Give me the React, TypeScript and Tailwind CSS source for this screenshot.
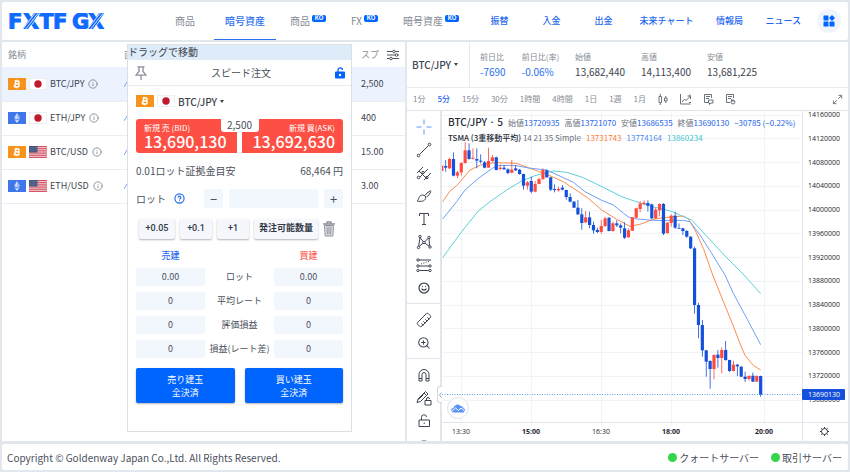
import type { ReactNode } from "react";
import { Info, CircleHelp, Smile, ZoomIn, Maximize2, Ruler } from "lucide-react";

/* ---------- shared pieces ---------- */

function Bitcoin() {
  return (
    <svg viewBox="0 0 18 12" className="h-3 w-[18px] shrink-0" aria-hidden="true">
      <rect width="18" height="12" fill="#f7931a" />
      <g transform="rotate(12 9 6)" fill="none" stroke="#fff" strokeWidth="1.5">
        <path d="M7.2 2.8v6.4M7.2 3.2h2.3a1.3 1.3 0 0 1 0 2.7H7.2M7.2 5.9h2.7a1.5 1.5 0 0 1 0 3H7.2" />
        <path d="M6 3.1h1.4M6 8.9h1.4M8 1.8v1.2M9.6 1.8v1.2M8 9v1.3M9.6 9v1.3" strokeWidth="0.9" />
      </g>
    </svg>
  );
}

function Ether() {
  return (
    <svg viewBox="0 0 18 12" className="h-3 w-[18px] shrink-0" aria-hidden="true">
      <rect width="18" height="12" fill="#3f76ea" />
      <path d="M9 1 6.2 6 9 7.6 11.800 6Z" fill="#cfe0ff" />
      <path d="M9 1v6.600L11.800 6Z" fill="#9fbffa" />
      <path d="M6.300 7 9 11l2.700-4L9 8.500Z" fill="#dfeaff" />
    </svg>
  );
}

function Japan() {
  return (
    <svg viewBox="0 0 18 12" className="h-3 w-[18px] shrink-0" aria-hidden="true">
      <rect x="0.500" y="0.500" width="17" height="11" fill="#fff" stroke="#eceff3" />
      <circle cx="9" cy="6" r="3.700" fill="#c01a2c" />
    </svg>
  );
}

function Usa() {
  return (
    <svg viewBox="0 0 18 12" className="h-3 w-[18px] shrink-0" aria-hidden="true">
      <rect width="18" height="12" fill="#f3d9dc" />
      {[0, 1, 2, 3, 4, 5, 6].map((n) => (
        <rect key={n} y={n * 1.85} width="18" height="0.95" fill="#d0485a" />
      ))}
      <rect width="8.500" height="6.500" fill="#46557f" />
      <path d="M1 1.500h7M1 3.200h7M1 4.900h7" stroke="#8b97b8" strokeWidth="0.600" strokeDasharray="0.800 0.800" />
    </svg>
  );
}

function Caret() {
  return <span className="border-x-[2px] border-t-[3px] border-x-transparent border-t-[#3d4450]" />;
}

function Ko() {
  return (
    <span className="mb-[5px] flex h-[7px] w-[14px] items-center justify-center rounded-[2px] bg-[#0064ff] font-['Inter',sans-serif] text-[6px] font-bold leading-none text-white">
      KO
    </span>
  );
}

/* ---------- top bar ---------- */

function Logo() {
  return (
    <svg viewBox="0 0 98 16" className="h-4 w-[98px] shrink-0" role="img" aria-label="FXTF GX">
      <text
        x="-1 14 30 44 63 79"
        y="16"
        fill="#0f6bff"
        stroke="#0f6bff"
        strokeWidth="1"
        fontFamily="'DejaVu Sans', sans-serif"
        fontSize="21"
        fontWeight="700"
      >
        FXTFGX
      </text>
      <g stroke="#fff" strokeWidth="0.8">
        <path d="M13 17 27 -1M16 17 30 -1M19 17 32 -1" />
        <path d="M78 17 92 -1M81 17 95 -1M84 17 97 -1" />
      </g>
    </svg>
  );
}

const markets = [
  { name: "商品", ko: false, current: false },
  { name: "暗号資産", ko: false, current: true },
  { name: "商品", ko: true, current: false },
  { name: "FX", ko: true, current: false },
  { name: "暗号資産", ko: true, current: false },
];

const services = ["振替", "入金", "出金", "未来チャート", "情報局", "ニュース"];

function TopBar() {
  return (
    <header className="flex h-[38px] items-center rounded-[2px] bg-white pl-[7px] pr-[7px]">
      <Logo />
      <nav className="ml-[57px] flex h-full gap-[3px] text-[10px] text-[#858b94]">
        {markets.map((m, i) => (
          <a
            key={i}
            href="#"
            className={
              m.current
                ? "flex items-center gap-[2px] whitespace-nowrap border-b border-[#2b6ff0] px-[11px] font-medium text-[#2b6ff0]"
                : "flex items-center gap-[2px] whitespace-nowrap border-b border-transparent px-[11px] first:mr-[5px]"
            }
          >
            {m.name}
            {m.ko && <Ko />}
          </a>
        ))}
      </nav>
      <nav className="ml-auto flex items-center text-[9px] font-medium text-[#1f68ee]">
        {services.map((s) => (
          <a key={s} href="#" className="min-w-[52px] whitespace-nowrap px-[10px] text-center">
            {s}
          </a>
        ))}
      </nav>
      <button aria-label="メニュー" className="ml-[6px] flex h-6 w-6 shrink-0 items-center justify-center rounded-full bg-[#f0f4fd]">
        <svg viewBox="0 0 12 12" className="h-3 w-3" fill="#0064ff" aria-hidden="true">
          <rect x="0.500" y="0.500" width="5" height="5" rx="0.500" />
          <rect x="0.500" y="6.500" width="5" height="5" rx="0.500" />
          <rect x="6.500" y="6.500" width="5" height="5" rx="0.500" />
          <path d="m9 0 3 3-3 3-3-3Z" />
        </svg>
      </button>
    </header>
  );
}

/* ---------- instrument list ---------- */

const instruments = [
  { pair: "BTC/JPY", spread: "2,500", coin: <Bitcoin />, flag: <Japan /> },
  { pair: "ETH/JPY", spread: "400", coin: <Ether />, flag: <Japan /> },
  { pair: "BTC/USD", spread: "15.00", coin: <Bitcoin />, flag: <Usa /> },
  { pair: "ETH/USD", spread: "3.00", coin: <Ether />, flag: <Usa /> },
];

function InstrumentList() {
  return (
    <section className="w-[403px] shrink-0 bg-white">
      <table className="w-full table-fixed border-collapse text-left text-[9px] text-[#3d4450]">
        <colgroup>
          <col className="w-[122px]" />
          <col />
          <col className="w-[44px]" />
        </colgroup>
        <thead>
          <tr className="h-[25px] text-[#8a9099]">
            <th className="pl-[6px] font-normal">銘柄</th>
            <th className="font-normal">直近</th>
            <th className="font-normal">
              <span className="flex items-center gap-2 whitespace-nowrap">
                スプ
                <button aria-label="表示設定">
                  <svg viewBox="0 0 12 12" className="h-3 w-3" fill="#fff" stroke="#50565f" aria-hidden="true">
                    <path d="M0 2.500h12M0 6h12M0 9.500h12" />
                    <circle cx="7" cy="2.500" r="1.300" />
                    <circle cx="9.500" cy="6" r="1.300" />
                    <circle cx="4" cy="9.500" r="1.300" />
                  </svg>
                </button>
              </span>
            </th>
          </tr>
        </thead>
        <tbody>
          {instruments.map((row, i) => (
            <tr
              key={row.pair}
              className={i === 0 ? "h-[34px] border-b border-[#eaedf1] bg-[#ecf2fe]" : "h-[34px] border-b border-[#eaedf1]"}
            >
              <td className="pl-[6px]">
                <span className="flex items-center gap-[3px]">
                  {row.coin}
                  {row.flag}
                  {row.pair}
                  <Info className="ml-px h-[10px] w-[10px] text-[#7c828b]" strokeWidth={2} />
                </span>
              </td>
              <td>
                <svg viewBox="0 0 60 14" className="h-[14px] w-[60px]" fill="none" stroke="#7ea6f5" aria-hidden="true">
                  <path d="M0 10 3 5l4 3 6-5 8 4 9-3 8 5 9-4 13 3" />
                </svg>
              </td>
              <td>{row.spread}</td>
            </tr>
          ))}
        </tbody>
      </table>
    </section>
  );
}

/* ---------- speed order window ---------- */

const positions = [
  { label: "ロット", sell: "0.00", buy: "0.00" },
  { label: "平均レート", sell: "0", buy: "0" },
  { label: "評価損益", sell: "0", buy: "0" },
  { label: "損益(レート差)", sell: "0", buy: "0" },
];

const steps = [
  { text: "+0.05", cls: "w-9 font-medium" },
  { text: "+0.1", cls: "w-8 font-medium" },
  { text: "+1", cls: "w-8 font-medium" },
  { text: "発注可能数量", cls: "w-16 font-bold" },
];

function SpeedOrder() {
  return (
    <section className="absolute left-[127px] top-[44px] w-[225px] border border-[#dcdfe3] bg-white pb-7 text-[10px] text-[#4a505b]">
      <div className="h-[15px] cursor-move bg-[#deebf9] leading-[14px] text-[#3d4450]">ドラッグで移動</div>
      <div className="flex h-[26px] items-center justify-between border-b border-[#e8ebef] pl-[7px] pr-[6px]">
        <button aria-label="固定">
          <svg viewBox="0 0 12 14" className="h-[14px] w-3" fill="none" stroke="#8a9099" strokeWidth="1.300" aria-hidden="true">
            <path d="M2.500.8h7M4 1v4.500L1 9.200h10L8 5.500V1M6 9.200V14" />
          </svg>
        </button>
        <h2>スピード注文</h2>
        <button aria-label="ロック解除">
          <svg viewBox="0 0 10 12" className="h-3 w-[10px]" fill="none" aria-hidden="true">
            <path d="M3 5V3a2.200 2.200 0 0 1 4.400 0" stroke="#0064ff" strokeWidth="1.300" />
            <path d="M0 5.500a1 1 0 0 1 1-1h8a1 1 0 0 1 1 1v5a1 1 0 0 1-1 1H1a1 1 0 0 1-1-1Z" fill="#0064ff" />
            <circle cx="5" cy="8" r="1.200" fill="#fff" />
          </svg>
        </button>
      </div>

      <div className="px-2">
        <button className="mt-[9px] flex h-3 items-center gap-[3px] font-medium text-[#3d4450]">
          <Bitcoin />
          <Japan />
          BTC/JPY
          <Caret />
        </button>

        <div className="relative mt-3 flex gap-[5px] text-white">
          <button className="h-[34px] flex-1 rounded-l-[3px] bg-[#fd4f43] px-2 pb-px text-left">
            <span className="block text-[8px] leading-[11px]">新規 売 (BID)</span>
            <span className="block text-[16px] font-medium leading-4">13,690,130</span>
          </button>
          <button className="h-[34px] flex-1 rounded-r-[3px] bg-[#fd4f43] px-2 pb-px text-right">
            <span className="block text-[8px] leading-[11px]">新規 買(ASK)</span>
            <span className="block text-[16px] font-medium leading-4">13,692,630</span>
          </button>
          <span className="absolute left-1/2 top-0 h-[13px] w-[38px] -translate-x-1/2 rounded-b-[3px] bg-white text-center leading-[11px] text-[#4a505b]">
            2,500
          </span>
        </div>

        <div className="my-3 flex justify-between leading-3">
          <span>0.01ロット証拠金目安</span>
          <span>68,464 円</span>
        </div>

        <div className="flex h-[19px] items-center">
          <label htmlFor="lot">ロット</label>
          <CircleHelp className="ml-2 h-[11px] w-[11px] text-[#1f68ee]" strokeWidth={2.5} />
          <button aria-label="減らす" className="ml-auto h-[19px] w-[19px] rounded-[2px] bg-[#f2f6fd] text-[13px] leading-none">
            −
          </button>
          <input id="lot" className="mx-[6px] h-[19px] w-[89px] rounded-[2px] bg-[#f2f6fd] px-1 outline-none" />
          <button aria-label="増やす" className="h-[19px] w-[19px] rounded-[2px] bg-[#f2f6fd] text-[13px] leading-none">
            +
          </button>
        </div>

        <div className="ml-[3px] mt-[11px] flex items-center gap-[5px]">
          {steps.map((s) => (
            <button
              key={s.text}
              className={`${s.cls} h-5 whitespace-nowrap rounded-[2px] bg-[#f5f7fd] font-['Roboto','Noto_Sans_CJK_JP',sans-serif] text-[9px] text-[#333a46] shadow-[0_1px_2px_rgba(0,0,0,0.3)]`}
            >
              {s.text}
            </button>
          ))}
          <button aria-label="クリア">
            <svg viewBox="0 0 12 16" className="h-4 w-3" fill="none" stroke="#8a9099" aria-hidden="true">
              <path d="M0 3h12M4 2.500V1h4v1.500" strokeWidth="1.300" />
              <path d="m1.500 4.500.7 10.500h7.600l.7-10.500Z" fill="#e4e6e9" />
              <path d="m4 5.500.3 8M6 5.500v8M8 5.500l-.3 8" />
            </svg>
          </button>
        </div>

        <table className="mt-[10px] w-full table-fixed border-separate border-spacing-0 text-center text-[9px]">
          <thead>
            <tr className="h-[13px] leading-[13px]">
              <th className="w-[69px] font-medium text-[#1f68ee]">売建</th>
              <th />
              <th className="w-[69px] font-medium text-[#fd6458]">買建</th>
            </tr>
          </thead>
          <tbody>
            {positions.map((p) => (
              <tr key={p.label}>
                <td className="pt-[6px]">
                  <span className="block h-[18px] rounded-[2px] bg-[#f2f6fd] leading-[18px]">{p.sell}</span>
                </td>
                <th className="whitespace-nowrap pt-[6px] font-normal leading-[18px]">{p.label}</th>
                <td className="pt-[6px]">
                  <span className="block h-[18px] rounded-[2px] bg-[#f2f6fd] leading-[18px]">{p.buy}</span>
                </td>
              </tr>
            ))}
          </tbody>
        </table>

        <div className="mt-[10px] flex gap-[10px] text-[9px] leading-[13px] text-white">
          <button className="h-[35px] flex-1 rounded-[2px] bg-[#0064ff] shadow-[0_1px_2px_rgba(0,0,0,0.3)]">
            売り建玉
            <br />
            全決済
          </button>
          <button className="h-[35px] flex-1 rounded-[2px] bg-[#0064ff] shadow-[0_1px_2px_rgba(0,0,0,0.3)]">
            買い建玉
            <br />
            全決済
          </button>
        </div>
      </div>
    </section>
  );
}

/* ---------- quote header ---------- */

const quotes = [
  { label: "前日比", value: "-7690", accent: true },
  { label: "前日比(率)", value: "-0.06%", accent: true },
  { label: "始値", value: "13,682,440", accent: false },
  { label: "高値", value: "14,113,400", accent: false },
  { label: "安値", value: "13,681,225", accent: false },
];

function QuoteHeader() {
  return (
    <div className="flex h-[46px] border-b border-[#e8ebef]">
      <button className="flex w-[63px] items-center gap-[3px] border-r border-[#e8ebef] pl-[5px] text-[10px] font-medium text-[#3d4450]">
        BTC/JPY
        <Caret />
      </button>
      <dl className="flex items-center gap-4 pl-[10px]">
        {quotes.map((q) => (
          <div key={q.label} className="whitespace-nowrap">
            <dt className="text-[8px] leading-[14px] text-[#858b94]">{q.label}</dt>
            <dd className={q.accent ? "text-[10px] leading-[15px] text-[#2b6ff0]" : "text-[10px] leading-[15px] text-[#3d4450]"}>{q.value}</dd>
          </div>
        ))}
      </dl>
    </div>
  );
}

const frames = ["1分", "5分", "15分", "30分", "1時間", "4時間", "1日", "1週", "1月"];

function FrameBar() {
  return (
    <div className="flex h-[23px] items-center gap-3 border-b border-[#dfe4ea] pl-[6px] pr-[5px] text-[8px] text-[#858b94]">
      {frames.map((f) => (
        <button key={f} className={f === "5分" ? "whitespace-nowrap font-medium text-[#1f68ee]" : "whitespace-nowrap"}>
          {f}
        </button>
      ))}
      <button aria-label="ローソク足">
        <svg viewBox="0 0 10 11" className="h-[11px] w-[10px]" fill="none" stroke="#6b717b" aria-hidden="true">
          <path d="M1 2.500h2.500v6H1ZM2.250 0v2.500M2.250 8.500V11M6.500 4H9v3H6.500ZM7.750 2v2M7.750 7v2" />
        </svg>
      </button>
      <button aria-label="インジケーター">
        <svg viewBox="0 0 12 11" className="h-[11px] w-3" fill="none" stroke="#6b717b" aria-hidden="true">
          <path d="M.5 0v10h10M2 8l2.500-3L6 6.500 10 2.500M7.500 2h3v3M9 8.500h2M10 .5v2" />
        </svg>
      </button>
      <button aria-label="テンプレート保存">
        <svg viewBox="0 0 10 11" className="h-[11px] w-[10px]" fill="none" stroke="#6b717b" aria-hidden="true">
          <path d="M4 8.500H.5v-8h7V4M2 2.500h4M2 4.500h3M4.500 6h4.500v3H7L5.500 10.500V9h-1Z" />
        </svg>
      </button>
      <button aria-label="テンプレート復元">
        <svg viewBox="0 0 10 11" className="h-[11px] w-[10px]" fill="none" stroke="#6b717b" aria-hidden="true">
          <path d="M4 8.500H.5v-8h7V4M2 2.500h4M2 4.500h3M5.500 5v2H8" />
          <circle cx="7" cy="8" r="2" />
        </svg>
      </button>
      <button aria-label="全画面" className="ml-auto">
        <Maximize2 className="h-[11px] w-[11px] text-[#6b717b]" strokeWidth={2} />
      </button>
    </div>
  );
}

/* ---------- drawing tools ---------- */

function ToolIcon({ children }: { children: ReactNode }) {
  return (
    <svg viewBox="0 0 16 16" className="h-4 w-4" fill="none" stroke="#3d4450" aria-hidden="true">
      {children}
    </svg>
  );
}

const toolGroups: { name: string; icon: ReactNode }[][] = [
  [
    {
      name: "十字カーソル",
      icon: (
        <ToolIcon>
          <path d="M8 .5v5M8 10.500v5M.5 8h5M10.500 8h5" stroke="#5b9bf5" />
        </ToolIcon>
      ),
    },
    {
      name: "トレンドライン",
      icon: (
        <ToolIcon>
          <path d="m3.500 12.500 9-9" />
          <circle cx="2.500" cy="13.500" r="1.300" />
          <circle cx="13.500" cy="2.500" r="1.300" />
        </ToolIcon>
      ),
    },
    {
      name: "ピッチフォーク",
      icon: (
        <ToolIcon>
          <path d="m1 8 6-6M4 12l8-8M8 15l7-7M3 6l7 7" />
          <circle cx="2.500" cy="12.500" r="1.300" />
          <circle cx="7" cy="7.500" r="1.200" />
          <circle cx="11" cy="12.500" r="1.200" />
        </ToolIcon>
      ),
    },
    {
      name: "ブラシ",
      icon: (
        <ToolIcon>
          <path d="M1 13c2-1 1.500-6 5.500-6C9 7 10 8.500 9.500 10.500 9 13 5 14 1 13ZM9 7.500l2-2.500 4-2.500M10.500 9l2-1.500 2.500-4" />
        </ToolIcon>
      ),
    },
    {
      name: "テキスト",
      icon: (
        <ToolIcon>
          <path d="M3.500 5V2.500h9V5M8 2.500v11M6 13.500h4" />
        </ToolIcon>
      ),
    },
    {
      name: "パターン",
      icon: (
        <ToolIcon>
          <path d="M2.500 13 4 3.500l4 5 5-5 .5 9-5.500-4Z" />
          <g fill="#fff">
            <circle cx="2.500" cy="13.500" r="1.200" />
            <circle cx="4" cy="2.500" r="1.200" />
            <circle cx="8" cy="8.500" r="1.200" />
            <circle cx="13" cy="3.500" r="1.200" />
            <circle cx="14" cy="13" r="1.200" />
          </g>
        </ToolIcon>
      ),
    },
    {
      name: "予測",
      icon: (
        <ToolIcon>
          <path d="M3 3h12M3 9h10M3 13.500h10" />
          <path d="m5 7 9-3" strokeDasharray="1 1.500" />
          <g fill="#fff">
            <circle cx="2" cy="3" r="1.200" />
            <circle cx="2" cy="9" r="1.200" />
            <circle cx="2" cy="13.500" r="1.200" />
            <circle cx="14" cy="9" r="1.200" />
            <circle cx="14" cy="13.500" r="1.200" />
          </g>
        </ToolIcon>
      ),
    },
    { name: "アイコン", icon: <Smile className="h-3 w-3" strokeWidth={2.5} /> },
  ],
  [
    { name: "計測", icon: <Ruler className="h-4 w-4 rotate-90" strokeWidth={1.5} /> },
    { name: "ズームイン", icon: <ZoomIn className="h-[14px] w-[14px]" strokeWidth={1.800} /> },
  ],
  [
    {
      name: "マグネット",
      icon: (
        <ToolIcon>
          <path d="M3 14V7.500a5 5 0 0 1 10 0V14h-3V7.500a2 2 0 0 0-4 0V14ZM3 11.500h3M10 11.500h3" />
        </ToolIcon>
      ),
    },
    {
      name: "描画モードを維持",
      icon: (
        <ToolIcon>
          <path d="M1 12.500 2 9l7.500-7.500 2.500 2.500L4.500 11.500ZM8 3l2.500 2.500M2.500 9.500l5-5" />
          <path d="M9 10.500h6v4.500H9ZM10.500 10.500V9a1.500 1.500 0 0 1 3 0" />
        </ToolIcon>
      ),
    },
    {
      name: "描画をロック",
      icon: (
        <ToolIcon>
          <path d="M3 7h10.500v6.500H3ZM5.500 7V4.500a2.500 2.500 0 0 1 5-.5M8.200 9.500v1.500" />
        </ToolIcon>
      ),
    },
    {
      name: "描画を隠す",
      icon: (
        <ToolIcon>
          <path d="M1.500 8C4 4 12 4 14.500 8 12 12 4 12 1.500 8Z" />
          <circle cx="8" cy="8" r="2" />
        </ToolIcon>
      ),
    },
  ],
];

function ToolRail() {
  return (
    <div className="relative w-[35px] shrink-0 border-r-2 border-[#e1e6ec] text-[#3d4450]">
      <div className="absolute inset-0 overflow-hidden">
        {toolGroups.map((group, i) => (
          <div key={i} className="flex flex-col items-center border-b border-[#e1e6ec] pb-1 pt-1">
            {group.map((tool) => (
              <button key={tool.name} aria-label={tool.name} className="flex h-[23px] w-[23px] shrink-0 items-center justify-center">
                {tool.icon}
              </button>
            ))}
          </div>
        ))}
      </div>
      <button
        aria-label="ツールバーを隠す"
        className="absolute -right-[2px] bottom-[38px] flex h-[17px] w-[5px] items-center justify-center rounded-l-[3px] border border-r-0 border-[#d5dae1] bg-white"
      >
        <svg viewBox="0 0 3 6" className="h-[6px] w-[3px]" fill="none" stroke="#8a9099" strokeWidth="0.800" aria-hidden="true">
          <path d="M2.500.5.500 3l2 2.500" />
        </svg>
      </button>
    </div>
  );
}

/* ---------- candle chart ---------- */

// [rising, body top, body bottom, high, low] in thirds of a chart unit
const candles: [number, number, number, number, number][] = [
  [1, 182, 198, 182, 198], [0, 183, 188, 165, 200], [1, 162, 190, 158, 192], [0, 162, 212, 142, 214],
  [1, 202, 212, 198, 220], [1, 174, 202, 172, 212], [1, 136, 174, 112, 176], [0, 136, 162, 115, 164],
  [1, 158, 161, 130, 164], [0, 162, 167, 130, 190], [0, 167, 170, 148, 175], [0, 172, 188, 168, 190],
  [1, 168, 188, 128, 188], [1, 157, 168, 150, 172], [0, 157, 195, 155, 196], [1, 188, 192, 178, 196],
  [0, 188, 193, 180, 194], [0, 193, 204, 190, 208], [1, 194, 203, 165, 205], [0, 190, 196, 180, 198],
  [0, 194, 207, 192, 209], [0, 207, 242, 206, 254], [1, 232, 242, 228, 254], [0, 228, 260, 215, 265],
  [1, 237, 260, 228, 262], [1, 222, 237, 218, 238], [1, 195, 222, 190, 226], [0, 196, 217, 194, 218],
  [0, 217, 254, 216, 258], [0, 252, 255, 238, 262], [1, 252, 256, 245, 260], [0, 248, 254, 240, 256],
  [0, 255, 276, 254, 284], [0, 276, 290, 265, 292], [0, 290, 308, 288, 309], [0, 308, 328, 285, 330],
  [0, 328, 354, 310, 374], [1, 337, 352, 318, 354], [0, 337, 360, 320, 370], [0, 360, 376, 350, 386],
  [0, 375, 381, 368, 384], [1, 363, 381, 345, 386], [1, 340, 363, 336, 366], [0, 338, 378, 337, 379],
  [1, 355, 378, 350, 380], [0, 355, 361, 346, 366], [0, 361, 368, 355, 385], [0, 370, 398, 352, 402],
  [1, 376, 397, 370, 398], [1, 337, 377, 336, 378], [1, 310, 338, 308, 340], [1, 296, 312, 288, 322],
  [1, 293, 297, 286, 300], [0, 294, 302, 286, 320], [0, 298, 340, 296, 342], [1, 314, 340, 308, 342],
  [1, 297, 316, 295, 334], [0, 297, 386, 294, 390], [1, 353, 384, 352, 386], [1, 332, 354, 328, 365],
  [0, 332, 368, 320, 372], [0, 370, 372, 355, 372], [0, 370, 378, 368, 390], [0, 378, 395, 375, 398],
  [0, 395, 430, 394, 432], [0, 430, 600, 425, 626], [0, 600, 660, 593, 700], [0, 660, 736, 645, 755],
  [0, 736, 770, 735, 815], [0, 768, 792, 766, 851], [1, 750, 792, 748, 823], [0, 749, 759, 735, 788],
  [1, 735, 759, 727, 805], [0, 735, 765, 708, 767], [0, 765, 798, 764, 801], [1, 779, 798, 767, 799],
  [0, 779, 784, 777, 813], [0, 785, 815, 784, 816], [0, 815, 822, 800, 831], [1, 813, 822, 810, 827],
  [0, 812, 830, 803, 831], [1, 813, 830, 811, 831], [0, 813, 869, 812, 875],
];

const averages = [
  {
    color: "#fb8c4a",
    points:
      "8,290 30,258 50,242 90,195 122,180 165,173 230,175 265,188 320,208 370,230 420,263 445,280 485,315 530,343 570,364 600,358 640,343 670,338 730,333 745,342 765,375 790,430 818,510 845,577 880,663 900,716 915,751 940,781 962,795",
  },
  {
    color: "#6fa0f3",
    points:
      "8,342 50,290 75,255 115,220 160,188 180,181 230,182 265,189 320,195 400,232 435,260 485,286 520,300 565,336 590,342 640,346 670,347 730,346 750,350 780,390 815,445 855,510 880,565 915,630 962,719",
  },
  {
    color: "#5fcfd8",
    points:
      "8,458 65,380 115,318 150,290 200,255 245,228 285,212 340,198 380,202 430,218 490,247 545,275 600,294 640,306 670,312 700,321 725,333 755,345 820,415 860,458 912,510 962,566",
  },
];

const priceLabels = Array.from({ length: 13 }, (_, i) => 14160000 - i * 40000);
const timeLabels = [
  { x: 19, text: "13:30", bold: false },
  { x: 89, text: "15:00", bold: true },
  { x: 159, text: "16:30", bold: false },
  { x: 229, text: "18:00", bold: true },
  { x: 322, text: "20:00", bold: true },
];

function CandleChart() {
  return (
    <div className="relative min-w-0 flex-1">
      <svg
        viewBox="0 0 406 330"
        className="block h-full w-full"
        fontFamily="'Open Sans', 'Noto Sans', sans-serif"
        fontSize="7"
        fontWeight="500"
        fill="#1f2530"
        role="img"
        aria-label="BTC/JPY 5分足チャート"
      >
        <g stroke="#f1f3f6">
          {priceLabels.map((p, i) => (
            <path key={p} d={`M0 ${Math.floor(4 + i * 23.77) + 0.5}H361`} />
          ))}
          {timeLabels.map((t) => (
            <path key={t.text} d={`M${t.x + 0.5} 0V315`} />
          ))}
        </g>
        <path d="M360.500 0V330M0 311.500H406" stroke="#e1e6ec" />
        <g transform="translate(-2 -6) scale(0.33333)">
          {averages.map((a) => (
            <polyline key={a.color} points={a.points} fill="none" stroke={a.color} strokeWidth="3" strokeLinejoin="round" />
          ))}
          {candles.map(([rising, top, bottom, high, low], i) => {
            const x = 962 - (candles.length - 1 - i) * 11.665;
            return (
              <g key={i} fill={rising ? "#ff4a3d" : "#1450dc"}>
                <rect x={x - 1.2} y={high} width="2.400" height={low - high} />
                <rect x={x - 4.8} y={top} width="9.600" height={bottom - top} />
              </g>
            );
          })}
        </g>
        <path d="M0 283.500H361" stroke="#5b9bf5" strokeDasharray="1 1.500" />
        {priceLabels.map((p, i) => (
          <text key={p} x="366" y={Math.floor(6.5 + i * 23.77)}>
            {p}
          </text>
        ))}
        <rect x="360" y="278" width="43" height="11" rx="1" fill="#1450dc" />
        <text x="366" y="286" fill="#fff">
          13690130
        </text>
        {timeLabels.map((t) => (
          <text key={t.text} x={t.x} y="323" textAnchor="middle" fontWeight={t.bold ? 700 : 500}>
            {t.text}
          </text>
        ))}
      </svg>

      <div className="absolute left-[6px] top-[3px] whitespace-nowrap text-[8px] leading-[15px] text-[#6b717b]">
        <p className="flex items-baseline gap-[5px]">
          <span className="text-[10px] font-medium text-[#252b36]">BTC/JPY · 5</span>
          {[
            ["始値", "13720935"],
            ["高値", "13721070"],
            ["安値", "13686535"],
            ["終値", "13690130"],
          ].map(([label, value]) => (
            <span key={label}>
              {label}
              <span className="text-[#2463e6]">{value}</span>
            </span>
          ))}
          <span className="text-[#2463e6]">−30785 (−0.22%)</span>
        </p>
        <p className="flex items-baseline gap-[5px]">
          <span>
            <span className="font-medium text-[#252b36]">TSMA (3重移動平均)</span> 14 21 35 Simple
          </span>
          <span className="text-[#fb7b31]">13731743</span>
          <span className="text-[#4c8bf0]">13774164</span>
          <span className="text-[#3fc3ce]">13860234</span>
        </p>
      </div>

      <a
        href="#"
        aria-label="チャート提供元"
        className="absolute bottom-[22px] left-[5px] flex h-[22px] w-[22px] items-center justify-center rounded-full border border-[#dfe4ea] bg-white"
      >
        <svg viewBox="0 0 15 9" className="h-[9px] w-[15px]" aria-hidden="true">
          <path d="M2.500 8.500a2.300 2.300 0 0 1 0-4.600A4 4 0 0 1 9.500 2a3 3 0 0 1 3 2.200 2.200 2.200 0 0 1 0 4.300Z" fill="#5a95f5" />
          <path d="m.5 7.500 4-3.500 3 2.500L10 4l4 3.500" fill="none" stroke="#fff" />
        </svg>
      </a>
      <button aria-label="チャート設定" className="absolute bottom-[4px] right-[18px]">
        <svg viewBox="0 0 11 11" className="h-[11px] w-[11px]" fill="none" stroke="#333a46" aria-hidden="true">
          <circle cx="5.500" cy="5.500" r="3" />
          <path d="M5.500 1v1.500M5.500 8.500V10M1 5.500h1.500M8.500 5.500H10M2.300 2.300l1 1M7.700 7.700l1 1M8.700 2.300l-1 1M3.300 7.700l-1 1" />
        </svg>
      </button>
    </div>
  );
}

/* ---------- page ---------- */

export default function App() {
  return (
    <div className="relative flex min-h-screen flex-col bg-[#e1e7ed] p-[2px] font-['Noto_Sans_CJK_JP',sans-serif]">
      <TopBar />
      <main className="mt-[2px] flex flex-1 gap-[2px]">
        <InstrumentList />
        <section className="flex min-w-0 flex-1 flex-col bg-white">
          <QuoteHeader />
          <FrameBar />
          <div className="flex min-h-0 flex-1">
            <ToolRail />
            <CandleChart />
          </div>
        </section>
      </main>
      <footer className="mt-[3px] flex h-[26px] items-center justify-between rounded-[2px] bg-white pl-[5px] pr-[6px] text-[10px] text-[#4a505b]">
        <p>Copyright © Goldenway Japan Co.,Ltd. All Rights Reserved.</p>
        <ul className="flex gap-3">
          {["クォートサーバー", "取引サーバー"].map((s) => (
            <li key={s} className="flex items-center gap-[2px]">
              <span className="h-[9px] w-[9px] rounded-full bg-[#33d64a]" />
              {s}
            </li>
          ))}
        </ul>
      </footer>
      <SpeedOrder />
    </div>
  );
}
